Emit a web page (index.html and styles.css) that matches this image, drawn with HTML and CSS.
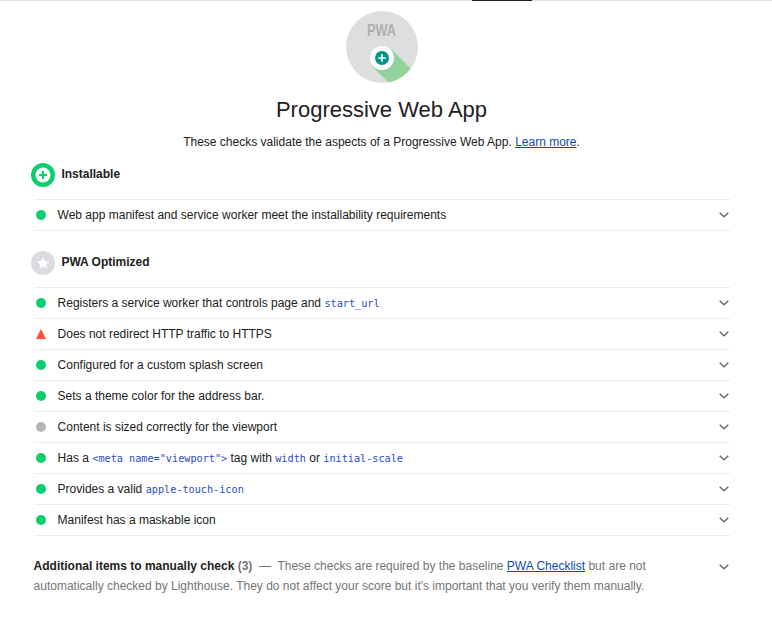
FILE: index.html
```html
<!DOCTYPE html>
<html lang="en">
<head>
<meta charset="utf-8">
<title>Progressive Web App</title>
<link rel="stylesheet" href="styles.css">
</head>
<body>
<div class="topbar"><span class="tab-mark"></span></div>
<header class="head">
  <svg class="gauge" width="72" height="72" viewBox="0 0 72 72" aria-hidden="true">
    <defs>
      <clipPath id="disc"><circle cx="36" cy="36" r="36"/></clipPath>
      <linearGradient id="shade" x1="0" y1="0" x2="1" y2="1">
        <stop offset="0" stop-color="#7fcfa6"/>
        <stop offset="1" stop-color="#a9d98f"/>
      </linearGradient>
    </defs>
    <circle cx="36" cy="36" r="36" fill="#dedede"/>
    <g clip-path="url(#disc)">
      <path d="M45 38 L80 73 L60 89 L26 55 Z" fill="url(#shade)"/>
    </g>
    <text class="pwa-text" x="21" y="25" textLength="29" lengthAdjust="spacingAndGlyphs">PWA</text>
    <circle cx="36" cy="47" r="12" fill="#fff"/>
    <circle cx="36" cy="47" r="7" fill="#009688"/>
    <path d="M36 43.2v7.6M32.2 47h7.6" stroke="#fff" stroke-width="1.7" fill="none"/>
  </svg>
  <h1 class="title">Progressive Web App</h1>
  <p class="desc">These checks validate the aspects of a Progressive Web App. <a href="#">Learn more</a>.</p>
</header>
<main class="content">
  <section class="group">
    <h2 class="group-title">
      <svg class="group-icon" width="24" height="24" viewBox="0 0 24 24" aria-hidden="true">
        <circle cx="12" cy="12" r="12" fill="#0cce6b"/>
        <circle cx="12" cy="12" r="7.5" fill="#fff"/>
        <path d="M12 8v8M8 12h8" stroke="#0cce6b" stroke-width="2" fill="none"/>
      </svg>
      <span class="group-name">Installable</span>
    </h2>
    <ul class="audits">
      <li class="audit"><span class="mark pass"></span><span class="label">Web app manifest and service worker meet the installability requirements</span><svg class="chev" width="10" height="6" viewBox="0 0 10 6"><path d="M.7.8 5 4.8 9.3.8" /></svg></li>
    </ul>
  </section>
  <section class="group">
    <h2 class="group-title">
      <svg class="group-icon" width="24" height="24" viewBox="0 0 24 24" aria-hidden="true">
        <circle cx="12" cy="12" r="12" fill="#dadce0"/>
        <path d="M12 6.2l1.8 3.9 4.2.5-3.1 2.9.8 4.2-3.7-2.1-3.7 2.1.8-4.2L6 10.6l4.2-.5z" fill="#fff"/>
      </svg>
      <span class="group-name">PWA Optimized</span>
    </h2>
    <ul class="audits">
      <li class="audit"><span class="mark pass"></span><span class="label">Registers a service worker that controls page and <code>start_url</code></span><svg class="chev" width="10" height="6" viewBox="0 0 10 6"><path d="M.7.8 5 4.8 9.3.8" /></svg></li>
      <li class="audit"><span class="mark fail"></span><span class="label">Does not redirect HTTP traffic to HTTPS</span><svg class="chev" width="10" height="6" viewBox="0 0 10 6"><path d="M.7.8 5 4.8 9.3.8" /></svg></li>
      <li class="audit"><span class="mark pass"></span><span class="label">Configured for a custom splash screen</span><svg class="chev" width="10" height="6" viewBox="0 0 10 6"><path d="M.7.8 5 4.8 9.3.8" /></svg></li>
      <li class="audit"><span class="mark pass"></span><span class="label">Sets a theme color for the address bar.</span><svg class="chev" width="10" height="6" viewBox="0 0 10 6"><path d="M.7.8 5 4.8 9.3.8" /></svg></li>
      <li class="audit"><span class="mark na"></span><span class="label">Content is sized correctly for the viewport</span><svg class="chev" width="10" height="6" viewBox="0 0 10 6"><path d="M.7.8 5 4.8 9.3.8" /></svg></li>
      <li class="audit"><span class="mark pass"></span><span class="label">Has a <code>&lt;meta name="viewport"&gt;</code> tag with <code>width</code> or <code>initial-scale</code></span><svg class="chev" width="10" height="6" viewBox="0 0 10 6"><path d="M.7.8 5 4.8 9.3.8" /></svg></li>
      <li class="audit"><span class="mark pass"></span><span class="label">Provides a valid <code>apple-touch-icon</code></span><svg class="chev" width="10" height="6" viewBox="0 0 10 6"><path d="M.7.8 5 4.8 9.3.8" /></svg></li>
      <li class="audit"><span class="mark pass"></span><span class="label">Manifest has a maskable icon</span><svg class="chev" width="10" height="6" viewBox="0 0 10 6"><path d="M.7.8 5 4.8 9.3.8" /></svg></li>
    </ul>
  </section>
  <section class="manual">
    <p class="manual-text"><strong>Additional items to manually check</strong> <span class="count">(3)</span> <span class="dash">—</span> These checks are required by the baseline <a href="#">PWA Checklist</a> but are not automatically checked by Lighthouse. They do not affect your score but it's important that you verify them manually.</p>
    <svg class="chev" width="10" height="6" viewBox="0 0 10 6"><path d="M.7.8 5 4.8 9.3.8" /></svg>
  </section>
</main>
</body>
</html>
```
FILE: styles.css
```css
* { box-sizing: border-box; }
html, body { margin: 0; padding: 0; }
body {
  background: #fff;
  color: #212121;
  font-family: "Liberation Sans", Arial, sans-serif;
  font-size: 12px;
  line-height: 20px;
  height: 630px;
  overflow: hidden;
}
.topbar {
  height: 1px;
  background: #e0e0e0;
  display: flex;
}
.tab-mark {
  width: 60px;
  height: 1px;
  margin-left: 472px;
  background: #212121;
}
.head {
  display: flex;
  flex-direction: column;
  align-items: center;
  padding: 10px 0 0 0;
  margin-left: -8px;
}
.gauge { display: block; }
.pwa-text {
  font-family: "Liberation Sans", Arial, sans-serif;
  font-size: 16px;
  font-weight: 700;
  fill: #b0b0b0;
}
.title {
  margin: 12px 0 0 -1px;
  font-size: 22px;
  line-height: 30px;
  font-weight: 400;
}
.desc {
  margin: 7px 0 0 -1px;
  line-height: 20px;
}
a { color: #0b4bb3; }
.content {
  padding: 0 42px 0 33.6px;
}
.group-title {
  display: flex;
  align-items: center;
  margin: 0;
  font-size: 12px;
  font-weight: 700;
  height: 24px;
  line-height: 24px;
  margin-left: -2.6px;
  gap: 6.4px;
}
.group-name { margin-bottom: 2px; }
.group:first-child { padding-top: 11px; }
.group-icon { flex: none; }
.audits {
  list-style: none;
  margin: 12px 0 0;
  padding: 0;
  border-top: 1px solid #ebebeb;
}
.group + .group { margin-top: 20px; }
.audit {
  display: flex;
  align-items: center;
  height: 31px;
  border-bottom: 1px solid #ebebeb;
  padding-left: 2.4px;
}
.mark {
  flex: none;
  width: 10px;
  height: 10px;
  margin-right: 11.6px;
}
.pass { background: #0cce6b; border-radius: 50%; }
.na { background: #b5b5b5; border-radius: 50%; }
.fail {
  background: #ff4e42;
  clip-path: polygon(50% 0, 100% 100%, 0 100%);
}
.label { flex: 1; color: #212121; }
code {
  font-family: "DejaVu Sans Mono", monospace;
  font-size: 10.2px;
  color: #2b4ac8;
}
.chev { flex: none; fill: none; stroke: #6a6a6a; stroke-width: 1.5; margin-right: 1px; }
.manual {
  display: flex;
  align-items: flex-start;
  margin-top: 20px;
  color: #757575;
}
.manual-text { flex: 1; margin: 0; max-width: 640px; }
.manual-text strong { color: #212121; }
.count { font-weight: 700; }
.dash { margin: 0 3.3px; }
.manual .chev { margin-top: 8px; margin-left: auto; }
```
